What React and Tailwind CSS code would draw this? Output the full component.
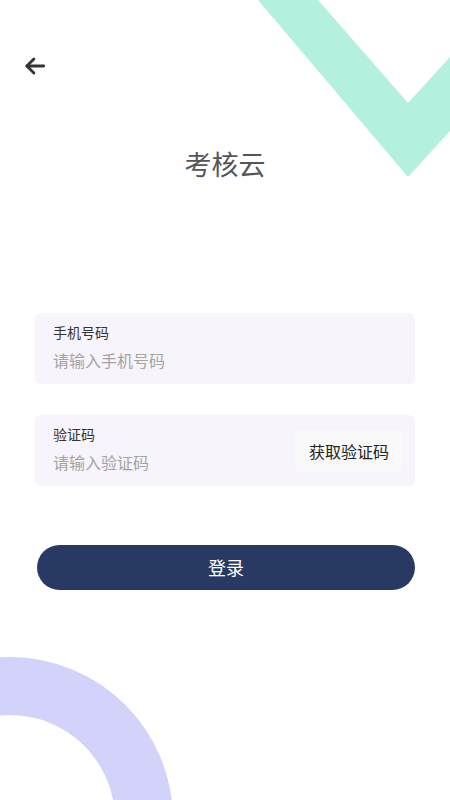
import React from 'react';

const FONT = { fontFamily: '"Noto Sans CJK SC", "Noto Sans", sans-serif' };

const Field = ({ label, placeholder, children }) => (
  <div className="flex h-[71px] items-center rounded-md bg-[#f7f5fb] pl-[18px] pr-[12px]">
    <div className="flex flex-1 flex-col pb-[4px]">
      <span className="text-[14px] leading-[20px] text-[#333]">{label}</span>
      <span className="mt-[7px] text-[16px] leading-[22px] text-[#a3a3a3]">{placeholder}</span>
    </div>
    {children}
  </div>
);

export default function App() {
  return (
    <div className="relative h-[800px] w-[450px] overflow-hidden bg-white" style={FONT}>
      {/* decorative shapes */}
      <svg className="absolute left-0 top-0" width="450" height="800" viewBox="0 0 450 800">
        <polygon points="258,0 318,0 408,103 450,57 450,131 408,177" fill="#b3f0df" />
        <path d="M -153 820 A 163 163 0 0 1 173 820 L 115 820 A 105 105 0 0 0 -95 820 Z" fill="#d2d2fa" />
      </svg>

      <div className="relative flex flex-col">
        <div className="flex h-[146px] items-start pl-[22px] pt-[53px]">
          <svg width="26" height="26" viewBox="0 0 24 24" fill="none" stroke="#333" strokeWidth="2.6" strokeLinecap="round" strokeLinejoin="round">
            <path d="M20 12H4.5" />
            <path d="M11 5.5L4.5 12l6.5 6.5" />
          </svg>
        </div>
        <h1 className="text-center text-[27px] font-normal leading-[36px] text-[#555]">考核云</h1>

        <div className="mt-[131px] flex flex-col gap-[31px] px-[35px]">
          <Field label="手机号码" placeholder="请输入手机号码" />
          <Field label="验证码" placeholder="请输入验证码">
            <div className="flex h-[42px] items-center rounded bg-[#f9f9f9] px-[14px] text-[16px] text-[#222]">获取验证码</div>
          </Field>
        </div>

        <div className="mt-[59px] pl-[37px] pr-[35px]">
          <button className="flex h-[45px] w-full items-center justify-center rounded-full bg-[#283a63] text-[18px] text-white">登录</button>
        </div>
      </div>
    </div>
  );
}
